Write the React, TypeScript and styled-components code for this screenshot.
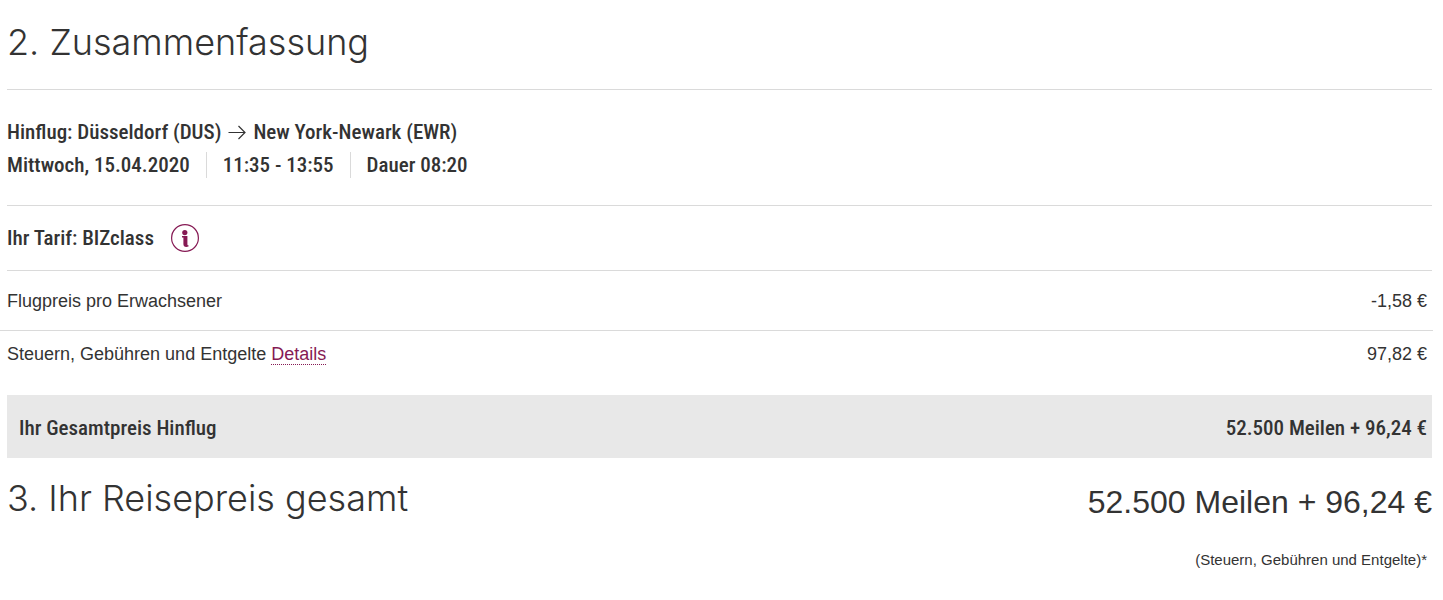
import React from "react";
import styled, { createGlobalStyle } from "styled-components";

const ink = "#333";
const line = "#dadada";
const accent = "#861a54";

const GlobalStyle = createGlobalStyle`
  *, *::before, *::after { box-sizing: border-box; }
  body {
    margin: 0;
    background: #fff;
    color: ${ink};
    font-family: "Liberation Sans", Arial, sans-serif;
    font-size: 18px;
    line-height: 24px;
  }
`;

const Page = styled.main`
  padding: 16px 11px 24px 7px;
`;

const Heading = styled.h2`
  margin: 0;
  font-family: Inter, "Liberation Sans", sans-serif;
  font-size: 36px;
  font-weight: 300;
  line-height: 52px;
`;

const SummaryHead = styled.header`
  padding-bottom: 21px;
  border-bottom: 1px solid ${line};
`;

const Strong = styled.p`
  display: flex;
  align-items: center;
  min-height: 33px;
  margin: 0;
  font-family: "Roboto Condensed", Roboto, sans-serif;
  font-size: 21px;
  font-weight: 500;
  line-height: 26px;
`;

const Flight = styled.section`
  padding: 25px 0 24px;
  border-bottom: 1px solid ${line};
`;

const Arrow = styled.svg`
  width: 18px;
  height: 16px;
  margin: 0 7px;
`;

const Fact = styled.span`
  & + & {
    margin-left: 16px;
    padding-left: 16px;
    border-left: 1px solid ${line};
  }
`;

const Fare = styled.section`
  display: flex;
  align-items: center;
  gap: 17px;
  height: 65px;
  border-bottom: 1px solid ${line};
`;

const InfoButton = styled.button`
  display: flex;
  padding: 0;
  border: 0;
  background: none;
  cursor: pointer;
`;

const Prices = styled.table`
  width: calc(100% + 8px);
  margin: 0 -1px 0 -7px;
  border-collapse: collapse;

  th, td {
    padding: 18px 6px 17px 7px;
    font-weight: 400;
    text-align: left;
  }
  td { text-align: right; }
  tr + tr > * {
    padding-top: 11px;
    padding-bottom: 29px;
    border-top: 1px solid ${line};
  }
`;

const DetailsLink = styled.a`
  color: ${accent};
  text-decoration: none;
  border-bottom: 1px dotted ${accent};
`;

const Total = styled.section`
  display: flex;
  justify-content: space-between;
  align-items: center;
  height: 63px;
  padding: 2px 5px 0 12px;
  background: #e8e8e8;
`;

const Grand = styled.section`
  display: flex;
  justify-content: space-between;
  align-items: flex-start;
  padding-top: 14px;
`;

const GrandPrice = styled.p`
  margin: 0;
  font-size: 32px;
  line-height: 60px;
`;

const Note = styled.p`
  margin: 18px 5px 0 0;
  font-size: 15px;
  line-height: 20px;
  text-align: right;
`;

export default function App() {
  return (
    <>
      <GlobalStyle />
      <Page>
        <SummaryHead>
          <Heading>2. Zusammenfassung</Heading>
        </SummaryHead>
        <Flight>
          <Strong>
            Hinflug: Düsseldorf (DUS)
            <Arrow viewBox="0 0 18 16" fill="none" stroke={ink} strokeWidth="1.2" role="img" aria-label="nach">
              <path d="M0.5 8.5H17M10.5 2L17 8.5L10.5 15" />
            </Arrow>
            New York-Newark (EWR)
          </Strong>
          <Strong>
            <Fact>Mittwoch, 15.04.2020</Fact>
            <Fact>11:35 - 13:55</Fact>
            <Fact>Dauer 08:20</Fact>
          </Strong>
        </Flight>
        <Fare>
          <Strong>Ihr Tarif: BIZclass</Strong>
          <InfoButton type="button" aria-label="Informationen zum Tarif">
            <svg width="28" height="28" viewBox="0 0 28 28">
              <circle cx="14" cy="14" r="13.4" fill="none" stroke={accent} strokeWidth="1.2" />
              <circle cx="13.8" cy="8.6" r="2.6" fill={accent} />
              <path d="M11 12H16.4V20.4Q16.4 21.3 17.5 21.3V22.6Q12.4 23.8 12.4 20V13.4H11Z" fill={accent} />
            </svg>
          </InfoButton>
        </Fare>
        <Prices>
          <tbody>
            <tr>
              <th scope="row">Flugpreis pro Erwachsener</th>
              <td>-1,58 €</td>
            </tr>
            <tr>
              <th scope="row">
                Steuern, Gebühren und Entgelte <DetailsLink href="#details">Details</DetailsLink>
              </th>
              <td>97,82 €</td>
            </tr>
          </tbody>
        </Prices>
        <Total>
          <Strong>Ihr Gesamtpreis Hinflug</Strong>
          <Strong>52.500 Meilen + 96,24 €</Strong>
        </Total>
        <Grand>
          <Heading>3. Ihr Reisepreis gesamt</Heading>
          <GrandPrice>52.500 Meilen + 96,24 €</GrandPrice>
        </Grand>
        <Note>(Steuern, Gebühren und Entgelte)*</Note>
      </Page>
    </>
  );
}
